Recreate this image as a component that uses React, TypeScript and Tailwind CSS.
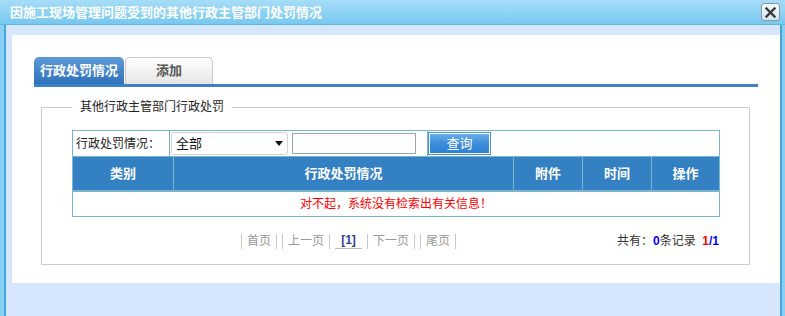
const FONT = "font-['Liberation_Sans','Noto_Sans_CJK_SC',sans-serif]";

function CloseButton() {
  return (
    <button
      type="button"
      className="flex h-[18px] w-[19px] items-center justify-center rounded-[3px] border border-[#8a98a4] bg-gradient-to-b from-[#f4fafe] to-[#d3e7f4]"
    >
      <svg width="11" height="11" viewBox="0 0 11 11">
        <path d="M1.5 1.5L9.5 9.5M9.5 1.5L1.5 9.5" stroke="#3b3b3b" strokeWidth="2.4" strokeLinecap="square" />
      </svg>
    </button>
  );
}

function Pager() {
  const link = "flex h-[15px] items-center border-x border-[#c8c8c8] px-[5px] text-[#999]";
  return (
    <div className="flex items-center gap-[5px] text-[12px] leading-[15px]">
      <span className={link}>首页</span>
      <span className={link}>上一页</span>
      <span className="flex h-[15px] w-[27px] items-end justify-center border-b border-[#bbb] font-bold text-[#2d3f8f]">
        [1]
      </span>
      <span className={link}>下一页</span>
      <span className={link}>尾页</span>
    </div>
  );
}

export default function App() {
  const headers = ["类别", "行政处罚情况", "附件", "时间", "操作"];

  return (
    <div className={`flex h-[316px] w-[785px] flex-col ${FONT}`}>
      <div className="flex h-[25px] items-center justify-between border-b border-[#62b6e4] bg-gradient-to-b from-[#a6ddf8] via-[#8fd3f4] to-[#77c8ef] pl-[10px] pr-[5px]">
        <span className="text-[13px] font-bold leading-none text-white">
          因施工现场管理问题受到的其他行政主管部门处罚情况
        </span>
        <CloseButton />
      </div>

      <div className="flex flex-1">
        <div className="w-[4px] bg-[#88cef2]" />
        <div className="w-[2px] bg-[#45a5dd]" />

        <div className="flex-1 bg-[#d6e6fd] pl-[6px] pt-[10px]">
          <div className="h-[248px] bg-white pt-[22px]">
            {/* tabs */}
            <div className="mx-[22px] flex gap-[1px] border-b-[3px] border-[#3a82c4]">
              <div className="flex h-[27px] w-[90px] items-center justify-center rounded-t-[5px] bg-gradient-to-b from-[#5d9bd7] to-[#2d72bb] text-[13px] font-bold text-white">
                行政处罚情况
              </div>
              <div className="flex h-[27px] w-[88px] items-center justify-center rounded-t-[5px] border border-b-0 border-[#c9c9c9] bg-gradient-to-b from-white to-[#e6e6e6] text-[13px] font-bold text-[#555]">
                添加
              </div>
            </div>

            {/* fieldset */}
            <fieldset className="ml-[29px] mr-[30px] mt-[12px] border border-[#cccccc] pb-[15px]">
              <legend className="ml-[30px] px-[8px] text-[12px] leading-[16px] text-[#222]">
                其他行政主管部门行政处罚
              </legend>

              <div className="ml-[30px] mt-[15px] w-[648px] border border-[#78b4cc] text-[12px]">
                {/* filter row */}
                <div className="flex h-[26px] border-b border-[#78b4cc]">
                  <div className="flex w-[97px] items-center border-r border-[#78b4cc] pl-[3px] text-[#222]">
                    行政处罚情况：
                  </div>
                  <div className="flex w-[258px] items-center border-r border-[#78b4cc] pl-[1px]">
                    <div className="flex h-[23px] w-[117px] items-center justify-between rounded-[3px] border border-[#d4d4d4] bg-white pl-[4px] pr-[4px] text-[13px] text-[#111]">
                      <span>全部</span>
                      <svg width="8" height="5" viewBox="0 0 8 5">
                        <path d="M0 0H8L4 5Z" fill="#111" />
                      </svg>
                    </div>
                    <div className="ml-[4px] h-[21px] w-[124px] border border-[#9aa6b2] bg-white" />
                  </div>
                  <div className="flex flex-1 items-center">
                    <button
                      type="button"
                      className="flex h-[23px] w-[63px] items-center justify-center border border-[#4b93d6] bg-gradient-to-b from-[#6cb2ea] via-[#3d8ddb] to-[#2a7fd6] text-[13px] text-white shadow-[inset_0_0_0_1px_#ffffff]"
                    >
                      查询
                    </button>
                  </div>
                </div>

                {/* header */}
                <div className="grid h-[35px] grid-cols-[100px_340px_69px_69px_1fr] border-b-2 border-[#78b4cc] bg-[#3380c2] text-[13px] font-bold text-white">
                  {headers.map((h, i) => (
                    <div
                      key={h}
                      className={`flex items-center justify-center ${i > 0 ? "border-l border-[#78b4cc]" : ""}`}
                    >
                      {h}
                    </div>
                  ))}
                </div>

                {/* empty row */}
                <div className="flex h-[24px] items-center justify-center text-[#ff0000]">
                  对不起，系统没有检索出有关信息！
                </div>
              </div>

              {/* pagination */}
              <div className="ml-[30px] mt-[17px] flex w-[648px] items-center">
                <div className="ml-[169px]">
                  <Pager />
                </div>
                <div className="ml-auto mr-[1px] text-[12px] leading-[15px] text-[#333]">
                  共有：<b className="text-[#0000ff]">0</b>条记录&nbsp;&nbsp;
                  <b className="text-[#ff0000]">1</b>
                  <b className="text-[#0000ff]">/1</b>
                </div>
              </div>
            </fieldset>
          </div>
        </div>

        <div className="w-[2px] bg-[#45a5dd]" />
        <div className="w-[3px] bg-[#88cef2]" />
      </div>
    </div>
  );
}
